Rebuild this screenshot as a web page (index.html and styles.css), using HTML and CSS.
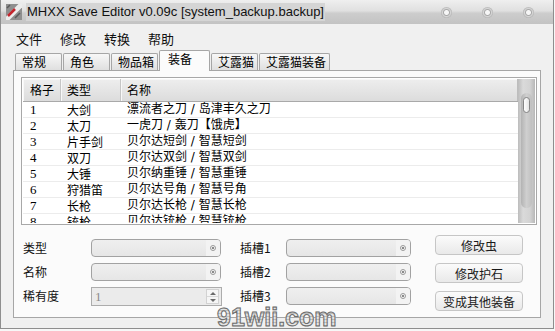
FILE: index.html
```html
<!DOCTYPE html>
<html lang="zh">
<head>
  <meta charset="UTF-8">
  <title>MHXX Save Editor</title>
  <link rel="stylesheet" href="styles.css">
</head>
<body>
  <div class="window">
    <div class="titlebar">
      <svg class="app-icon" width="16" height="16" viewBox="0 0 16 16">
        <rect width="16" height="16" fill="#8f8f8f"/>
        <path d="M0 16L16 0" stroke="#ececec" stroke-width="5"/>
        <path d="M2 12l7-7" stroke="#c4262e" stroke-width="2.5"/>
        <path d="M9 14l5-5M1 4l3-3" stroke="#5a5a5a" stroke-width="1.5"/>
      </svg>
      <span class="title">MHXX Save Editor v0.09c [system_backup.backup]</span>
      <div class="controls">
        <span class="dot"></span>
        <span class="dot"></span>
        <span class="dot"></span>
      </div>
    </div>

    <div class="menubar">
      <span class="menu">文件</span>
      <span class="menu">修改</span>
      <span class="menu">转换</span>
      <span class="menu">帮助</span>
    </div>

    <div class="tabs">
      <div class="tab">常规</div>
      <div class="tab">角色</div>
      <div class="tab">物品箱</div>
      <div class="tab active">装备</div>
      <div class="tab">艾露猫</div>
      <div class="tab">艾露猫装备</div>
    </div>

    <div class="pane">
      <div class="table">
        <div class="view">
          <div class="row head">
            <div class="cell c1">格子</div>
            <div class="cell c2">类型</div>
            <div class="cell c3">名称</div>
          </div>
          <div class="row"><div class="cell c1">1</div><div class="cell c2">大剑</div><div class="cell c3">漂流者之刀 / 岛津丰久之刀</div></div>
          <div class="row"><div class="cell c1">2</div><div class="cell c2">太刀</div><div class="cell c3">一虎刀 / 轰刀【饿虎】</div></div>
          <div class="row"><div class="cell c1">3</div><div class="cell c2">片手剑</div><div class="cell c3">贝尔达短剑 / 智慧短剑</div></div>
          <div class="row"><div class="cell c1">4</div><div class="cell c2">双刀</div><div class="cell c3">贝尔达双剑 / 智慧双剑</div></div>
          <div class="row"><div class="cell c1">5</div><div class="cell c2">大锤</div><div class="cell c3">贝尔纳重锤 / 智慧重锤</div></div>
          <div class="row"><div class="cell c1">6</div><div class="cell c2">狩猎笛</div><div class="cell c3">贝尔达号角 / 智慧号角</div></div>
          <div class="row"><div class="cell c1">7</div><div class="cell c2">长枪</div><div class="cell c3">贝尔达长枪 / 智慧长枪</div></div>
          <div class="row"><div class="cell c1">8</div><div class="cell c2">铳枪</div><div class="cell c3">贝尔达铳枪 / 智慧铳枪</div></div>
        </div>
        <div class="scrollbar">
          <div class="groove"><div class="thumb"></div></div>
        </div>
      </div>

      <div class="form">
        <div class="fields">
          <div class="label">类型</div>
          <div class="combo"><span class="drop"><i></i></span></div>
          <div class="label slot">插槽1</div>
          <div class="combo"><span class="drop"><i></i></span></div>

          <div class="label">名称</div>
          <div class="combo"><span class="drop"><i></i></span></div>
          <div class="label slot">插槽2</div>
          <div class="combo"><span class="drop"><i></i></span></div>

          <div class="label">稀有度</div>
          <div class="spin">
            <span class="value">1</span>
            <span class="arrows"><b class="up"></b><b class="down"></b></span>
          </div>
          <div class="label slot">插槽3</div>
          <div class="combo"><span class="drop"><i></i></span></div>
        </div>
        <div class="buttons">
          <button>修改虫</button>
          <button>修改护石</button>
          <button>变成其他装备</button>
        </div>
      </div>
    </div>

    <div class="watermark">91wii.com</div>
  </div>
</body>
</html>
```

FILE: styles.css
```css
* { box-sizing: border-box; }
body { margin: 0; background: #f7f7f7; font-family: "Noto Sans CJK SC", sans-serif; font-size: 12px; color: #000; }

.window {
  position: relative;
  width: 554px;
  height: 329px;
  border: 1px solid #8e8e8e;
  border-top: none;
  background: #f0f0f0;
  display: flex;
  flex-direction: column;
  overflow: hidden;
}

/* title bar */
.titlebar {
  height: 24px;
  display: flex;
  align-items: center;
  padding-left: 5px;
  background: linear-gradient(#efefef, #e0e0e0 45%, #cdcdcd 55%, #c3c3c3);
}
.app-icon { margin-right: 4px; }
.title {
  font-family: "Liberation Sans", sans-serif;
  font-size: 13px;
  line-height: 18px;
  padding: 0 1px;
  background: #d5d5d5;
  color: #111;
}
.controls { margin-left: auto; display: flex; gap: 30px; padding-right: 19px; }
.dot {
  width: 11px;
  height: 11px;
  border-radius: 50%;
  background: radial-gradient(circle, #f6f6f6 0 2px, #a9a9a9 3px, #d6d6d6 4px, #b4b4b4 5.5px);
}

/* menu */
.menubar {
  height: 26px;
  display: flex;
  align-items: center;
  padding: 3px 0 0 6px;
}
.menu { padding: 0 9px; font-size: 13px; color: #111; }

/* tabs */
.tabs {
  height: 20px;
  display: flex;
  align-items: flex-end;
  margin-left: 14px;
  gap: 1px;
}
.tab {
  height: 17px;
  min-width: 47px;
  padding: 0 3px 0 6px;
  line-height: 16px;
  border: 1px solid #a6a6a6;
  border-bottom: none;
  border-radius: 2px 2px 0 0;
  background: linear-gradient(#f7f7f7, #dfdfdf);
}
.tab.active {
  position: relative;
  z-index: 1;
  height: 21px;
  min-width: 51px;
  margin-bottom: -1px;
  padding-left: 8px;
  line-height: 15px;
  background: #fbfbfb;
}

/* tab pane */
.pane {
  height: 248px;
  margin: 0 12px;
  padding: 6px 3px 0 7px;
  border: 1px solid #a6a6a6;
  background: #fbfbfb;
}

.table {
  height: 148px;
  display: flex;
  padding: 1px;
  border: 1px solid #a8a8a8;
  background: #fff;
}
.view { flex: 1; overflow: hidden; }

.row {
  height: 16px;
  display: flex;
  border-bottom: 1px solid #ececec;
  line-height: 15px;
  white-space: nowrap;
}
.cell { padding-left: 6px; }
.c1 { width: 38px; padding-left: 7px; font-family: "Liberation Serif", serif; font-size: 13px; }
.c2 { width: 60px; }
.c3 { flex: 1; font-family: "DejaVu Sans", "Noto Sans CJK SC", sans-serif; }

.row.head {
  height: 23px;
  line-height: 22px;
  border-bottom: 1px solid #a9a9a9;
  background: linear-gradient(#eeeeee, #dcdcdc);
}
.head .cell {
  border-right: 1px solid #c6c6c6;
  box-shadow: inset 1px 1px 0 #f8f8f8;
  font-family: "Noto Sans CJK SC", sans-serif;
  font-size: 12px;
}
.head .c3 { border-right: 1px solid #bdbdbd; }

.scrollbar {
  width: 17px;
  display: flex;
  padding: 14px 3px 15px 3px;
  background: linear-gradient(to right, #bcbcbc, #dadada 30%, #d3d3d3 70%, #b8b8b8);
}
.groove {
  flex: 1;
  border-radius: 6px;
  background: linear-gradient(to right, #b3b3b3, #cfcfcf 50%, #c0c0c0);
}
.thumb {
  width: 7px;
  height: 16px;
  margin: 4px auto 0;
  border: 1px solid #858585;
  border-radius: 4px;
  background: linear-gradient(to right, #ffffff, #e4e4e4);
}

/* form */
.form { display: flex; margin-top: 10px; padding-left: 2px; }
.fields {
  display: grid;
  grid-template-columns: 68px 130px 65px 125px;
  grid-auto-rows: 18px;
  row-gap: 6px;
  margin-top: 4px;
}
.label { font-size: 12px; line-height: 18px; color: #111; }
.label.slot { padding-left: 19px; }

.combo {
  display: flex;
  justify-content: flex-end;
  border: 1px solid #a2a2a2;
  border-radius: 4px;
  background: linear-gradient(#efefef, #e6e6e6);
}
.drop {
  width: 14px;
  display: flex;
  align-items: center;
  justify-content: center;
  border-radius: 0 3px 3px 0;
  background: #f3f3f3;
}
.drop i {
  width: 6px;
  height: 6px;
  border: 1px solid #9a9a9a;
  border-radius: 50%;
  background: radial-gradient(circle, #8a8a8a 0 1px, transparent 1.5px);
}

.spin {
  display: flex;
  justify-content: space-between;
  width: 131px;
  height: 19px;
  border: 1px solid #acacac;
  background: #ebebeb;
}
.spin .value { padding-left: 3px; font-family: "Liberation Serif", serif; font-size: 13px; line-height: 17px; color: #8c8c8c; }
.arrows {
  width: 13px;
  margin: 1px 2px 1px 0;
  display: flex;
  flex-direction: column;
  border: 1px solid #d2d2d2;
  background: #f5f5f5;
}
.arrows b { flex: 1; display: flex; align-items: center; justify-content: center; }
.arrows b::before { content: ""; border-left: 3px solid transparent; border-right: 3px solid transparent; }
.arrows .up { border-bottom: 1px solid #d8d8d8; }
.arrows .up::before { border-bottom: 3px solid #6a6a6a; }
.arrows .down::before { border-top: 3px solid #6a6a6a; }

.buttons { display: flex; flex-direction: column; gap: 8px; margin-left: 24px; }
button {
  width: 88px;
  height: 20px;
  padding: 0;
  border: 1px solid #c6c6c6;
  border-radius: 4px;
  background: linear-gradient(#fbfbfb, #e9e9e9);
  font-family: "Noto Sans CJK SC", sans-serif;
  font-size: 12px;
  color: #1a1a1a;
}

/* site watermark over the window */
.watermark {
  position: absolute;
  left: 216px;
  top: 305px;
  font-family: "Liberation Sans", sans-serif;
  font-weight: bold;
  font-size: 25px;
  line-height: 25px;
  color: transparent;
  background: repeating-linear-gradient(#e4e4e4 0 2px, #bdbdbd 2px 3px);
  -webkit-background-clip: text;
  background-clip: text;
  -webkit-text-stroke: 1px #6e6e6e;
}
```
